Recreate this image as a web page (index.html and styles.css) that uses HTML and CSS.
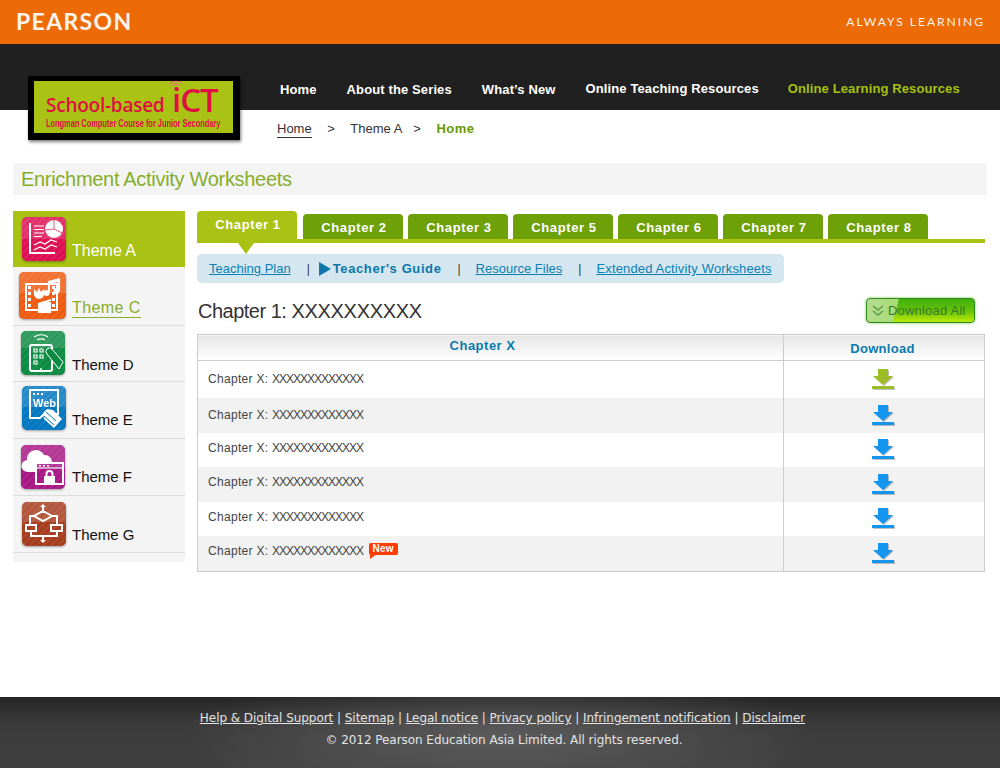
FILE: index.html
```html
<!DOCTYPE html>
<html>
<head>
    <title>Enrichment Activity Worksheets</title>
    <link rel="stylesheet" href="styles.css">
</head>
<body>
    <svg class="defs" width="0" height="0">
        <defs>
            <pattern id="stripes" width="5" height="5" patternUnits="userSpaceOnUse" patternTransform="rotate(45)">
                <rect width="2" height="5" fill="#fff" fill-opacity="0.07" />
            </pattern>
        </defs>
    </svg>
    <div class="top-bar">
        <div class="brand">PEARSON</div>
        <div class="slogan">ALWAYS LEARNING</div>
    </div>
    <div class="nav-bar">
        <div class="logo">
            <div class="logo-inner">
                <div class="logo-title">
                    <span class="logo-school">School-based</span>
                    <span class="logo-ict">
                        <svg class="logo-wifi" viewBox="0 0 14 7"><path d="M1 3.5C4 .5 10 .5 13 3.5M3.5 5.5C5.5 3.8 8.5 3.8 10.5 5.5" /></svg>
                        iCT
                    </span>
                </div>
                <div class="logo-sub">Longman Computer Course for Junior Secondary</div>
            </div>
        </div>
        <ul class="nav">
            <li><a href="#">Home</a></li>
            <li><a href="#">About the Series</a></li>
            <li><a href="#">What’s New</a></li>
            <li class="up"><a href="#">Online Teaching Resources</a></li>
            <li class="up current"><a href="#">Online Learning Resources</a></li>
        </ul>
    </div>
    <div class="crumbs">
        <a href="#">Home</a>
        <span class="sep first">&gt;</span>
        <span>Theme A</span>
        <span class="sep">&gt;</span>
        <strong>Home</strong>
    </div>
    <h1 class="page-title">Enrichment Activity Worksheets</h1>
    <div class="main">
        <ul class="side">
            <li class="active">
                <svg class="icon" viewBox="0 0 44 44">
                    <rect width="44" height="44" rx="5" fill="#dd0f52" />
                    <rect width="44" height="44" rx="5" fill="url(#stripes)" />
                    <path class="gloss" d="M0 5a5 5 0 0 1 5-5h34a5 5 0 0 1 5 5v17H0z" />
                    <path class="line" d="M8 6v30h25" />
                    <path class="line thin" d="M12 9h10M12 12.5h10M12 16h10M12 19.5h8M12 28l6-3 5 2 6-4 6 2M12 33l6-3 5 2 6-4 6 2" />
                    <circle class="solid" cx="32" cy="12" r="9" />
                    <path class="cut" d="M32 3v9l8 4M32 12l-9 1" />
                </svg>
                <span>Theme A</span>
            </li>
            <li class="on big">
                <svg class="icon" viewBox="0 0 47 47">
                    <rect width="47" height="47" rx="5" fill="#ee5a10" />
                    <rect width="47" height="47" rx="5" fill="url(#stripes)" />
                    <path class="gloss" d="M0 5a5 5 0 0 1 5-5h37a5 5 0 0 1 5 5v16H0z" />
                    <path class="line" d="M7 12h31v26H7z" />
                    <path class="solid" d="M9 14h3v3H9zM9 20h3v3H9zM9 26h3v3H9zM9 32h3v3H9zM33 14h3v3h-3zM33 20h3v3h-3zM33 26h3v3h-3zM33 32h3v3h-3z" />
                    <path class="solid" d="M15 17l3 3 2-4 2 4 3-3v5a5 5 0 0 1-10 0zM19 31l13-4v2l-3 1h3v11H19z" />
                    <path class="solid" d="M29 21V9l12-3v13h-2V10l-8 2v9z" />
                    <circle class="solid" cx="27.5" cy="21" r="3" />
                    <circle class="solid" cx="37.5" cy="19" r="3" />
                </svg>
                <a href="#">Theme C</a>
            </li>
            <li class="short">
                <svg class="icon" viewBox="0 0 44 44">
                    <rect width="44" height="44" rx="5" fill="#0b8a42" />
                    <rect width="44" height="44" rx="5" fill="url(#stripes)" />
                    <path class="gloss" d="M0 5a5 5 0 0 1 5-5h34a5 5 0 0 1 5 5v12H0z" />
                    <path class="line" d="M11 14h18a2 2 0 0 1 2 2v22a2 2 0 0 1-2 2H11a2 2 0 0 1-2-2V16a2 2 0 0 1 2-2z" />
                    <path class="line thin" d="M13 6c4-3 10-3 14 0M16 9c2-1.5 6-1.500 8 0M13 18h3v3h-3zM19 18h3v3h-3zM13 24h3v3h-3zM19 24h3v3h-3zM13 30h3v3h-3z" />
                    <path class="finger" d="M26 23a3 3 0 0 1 5-5l11 13-4 7z" />
                    <circle class="solid" cx="20" cy="38" r="1" />
                </svg>
                <span>Theme D</span>
            </li>
            <li class="web">
                <svg class="icon" viewBox="0 0 44 44">
                    <rect width="44" height="44" rx="5" fill="#0276bf" />
                    <rect width="44" height="44" rx="5" fill="url(#stripes)" />
                    <path class="gloss" d="M0 5a5 5 0 0 1 5-5h34a5 5 0 0 1 5 5v16H0z" />
                    <path class="line" d="M8 4h28v24H22l-4 4H8z" />
                    <path class="solid" d="M11 7h2v2h-2zM15 7h2v2h-2zM19 7h2v2h-2z" />
                    <text class="icon-text" x="11" y="21">Web</text>
                    <path class="solid" d="M25 23l6 1 9 9-8 9-10-9-1-6z" />
                    <path class="cut thin" d="M24 26l10 9M22 30l10 9" />
                </svg>
                <span>Theme E</span>
            </li>
            <li class="cloud">
                <svg class="icon" viewBox="0 0 44 44">
                    <rect width="44" height="44" rx="5" fill="#a81684" />
                    <rect width="44" height="44" rx="5" fill="url(#stripes)" />
                    <path class="gloss" d="M0 5a5 5 0 0 1 5-5h34a5 5 0 0 1 5 5v17H0z" />
                    <path class="solid" d="M7 27a6 6 0 0 1-1-12 9 9 0 0 1 17-5 7 7 0 0 1 8 7H14v10z" />
                    <path class="line" d="M15 18h27v21H15z" />
                    <path class="line thin" d="M15 23h27" />
                    <path class="solid" d="M18 20h2v1.5h-2zM22 20h2v1.5h-2zM26 20h2v1.5h-2zM23 31h11v8H23z" />
                    <path class="line" d="M25.5 31v-2a3 3 0 0 1 6 0v2" />
                </svg>
                <span>Theme F</span>
            </li>
            <li class="flow">
                <svg class="icon" viewBox="0 0 44 44">
                    <rect width="44" height="44" rx="5" fill="#a63c1e" />
                    <rect width="44" height="44" rx="5" fill="url(#stripes)" />
                    <path class="gloss" d="M0 5a5 5 0 0 1 5-5h34a5 5 0 0 1 5 5v15H0z" />
                    <path class="line" d="M21 5v4M21 9l9 5-9 5-9-5zM12 14H8v9M30 14h5v9M4 23h10v6H4zM29 23h11v6H29zM9 29v5h26v-5M21 34v5" />
                    <path class="solid" d="M18 5l3-3 3 3zM18 38h6l-3 3z" />
                </svg>
                <span>Theme G</span>
            </li>
        </ul>
        <div class="content">
            <ul class="tabs">
                <li class="active">Chapter 1</li>
                <li>Chapter 2</li>
                <li>Chapter 3</li>
                <li>Chapter 5</li>
                <li>Chapter 6</li>
                <li>Chapter 7</li>
                <li>Chapter 8</li>
            </ul>
            <div class="subnav">
                <a href="#">Teaching Plan</a>
                <span class="bar before-current">|</span>
                <strong class="current">Teacher's Guide</strong>
                <span class="bar">|</span>
                <a href="#">Resource Files</a>
                <span class="bar">|</span>
                <a class="wide" href="#">Extended Activity Worksheets</a>
            </div>
            <div class="heading">
                <h2>Chapter 1: <span class="xs">XXXXXXXXXX</span></h2>
                <a class="download-all" href="#">
                    <svg class="chev" viewBox="0 0 12 12"><path d="M1 1l5 4 5-4M1 6l5 4 5-4" /></svg>
                    Download All
                </a>
            </div>
            <table class="files">
                <tr>
                    <th class="name">Chapter X</th>
                    <th class="dl low">Download</th>
                </tr>
                <tr class="r1">
                    <td>Chapter X: <span class="xs">XXXXXXXXXXXXX</span></td>
                    <td class="dl"><svg class="arrow green" viewBox="0 0 22 21"><path d="M6 0h10v7h5L11 16 1 7h5zM0 17h22v3H0z" /></svg></td>
                </tr>
                <tr class="r2 alt">
                    <td>Chapter X: <span class="xs">XXXXXXXXXXXXX</span></td>
                    <td class="dl"><svg class="arrow" viewBox="0 0 22 21"><path d="M6 0h10v7h5L11 16 1 7h5zM0 17h22v3H0z" /></svg></td>
                </tr>
                <tr class="r3">
                    <td>Chapter X: <span class="xs">XXXXXXXXXXXXX</span></td>
                    <td class="dl"><svg class="arrow" viewBox="0 0 22 21"><path d="M6 0h10v7h5L11 16 1 7h5zM0 17h22v3H0z" /></svg></td>
                </tr>
                <tr class="r3 alt">
                    <td>Chapter X: <span class="xs">XXXXXXXXXXXXX</span></td>
                    <td class="dl"><svg class="arrow" viewBox="0 0 22 21"><path d="M6 0h10v7h5L11 16 1 7h5zM0 17h22v3H0z" /></svg></td>
                </tr>
                <tr class="r3">
                    <td>Chapter X: <span class="xs">XXXXXXXXXXXXX</span></td>
                    <td class="dl"><svg class="arrow" viewBox="0 0 22 21"><path d="M6 0h10v7h5L11 16 1 7h5zM0 17h22v3H0z" /></svg></td>
                </tr>
                <tr class="r3 alt last">
                    <td>Chapter X: <span class="xs">XXXXXXXXXXXXX</span> <span class="new">New</span></td>
                    <td class="dl"><svg class="arrow" viewBox="0 0 22 21"><path d="M6 0h10v7h5L11 16 1 7h5zM0 17h22v3H0z" /></svg></td>
                </tr>
            </table>
        </div>
    </div>
    <div class="footer">
        <p>
            <a href="#">Help &amp; Digital Support</a> |
            <a href="#">Sitemap</a> |
            <a href="#">Legal notice</a> |
            <a href="#">Privacy policy</a> |
            <a href="#">Infringement notification</a> |
            <a href="#">Disclaimer</a>
        </p>
        <p class="copy">© 2012 Pearson Education Asia Limited. All rights reserved.</p>
    </div>
</body>
</html>
```

FILE: styles.css
```css
* {
    box-sizing: border-box;
}
body {
    font-family: "Liberation Sans", Arial, sans-serif;
    margin: 0;
    padding: 0;
    height: 768px;
    overflow: hidden;
    display: flex;
    flex-direction: column;
    background-color: #fff;
    color: #333;
}
ul {
    list-style: none;
    margin: 0;
    padding: 0;
}
.defs {
    position: absolute;
}

/* orange strip */
.top-bar {
    height: 44px;
    flex: none;
    background-color: #ec6b07;
    color: #fdf3ea;
    display: flex;
    justify-content: space-between;
    align-items: center;
    padding: 0 15px 2px 16px;
}
.brand {
    font-family: Lato, sans-serif;
    font-size: 23px;
    font-weight: bold;
    letter-spacing: 1.35px;
}
.slogan {
    font-family: Lato, sans-serif;
    font-size: 12px;
    letter-spacing: 2px;
}

/* dark nav */
.nav-bar {
    height: 66px;
    flex: none;
    background-color: #202020;
    position: relative;
}
.logo {
    position: absolute;
    left: 28px;
    top: 32px;
    width: 212px;
    height: 64px;
    background-color: #000;
    padding: 5px 7px 7px 6px;
    box-shadow: 1px 2px 3px rgba(0, 0, 0, 0.5);
}
.logo-inner {
    height: 100%;
    background-color: #a9c213;
    color: #df0f43;
    padding-left: 12px;
}
.logo-title {
    display: flex;
    align-items: flex-end;
    height: 34px;
}
.logo-school {
    font-family: "Open Sans", sans-serif;
    font-weight: 600;
    font-size: 19px;
    line-height: 24px;
    width: 126px;
    white-space: nowrap;
    letter-spacing: -0.25px;
    margin-bottom: -2px;
}
.logo-ict {
    position: relative;
    font-family: "Open Sans", sans-serif;
    font-weight: 600;
    font-size: 33px;
    line-height: 30px;
    height: 30px;
    letter-spacing: -1px;
}
.logo-wifi {
    position: absolute;
    left: -3px;
    top: -5px;
    width: 14px;
    height: 7px;
    fill: none;
    stroke: #e8707a;
    stroke-width: 1.2;
}
.logo-sub {
    font-size: 10px;
    line-height: 11px;
    font-weight: bold;
    white-space: nowrap;
    margin-top: 3px;
    transform: scaleX(0.74);
    transform-origin: left center;
}
.nav {
    display: flex;
    gap: 30px;
    padding: 38px 0 0 280px;
    font-size: 13px;
    font-weight: bold;
    letter-spacing: 0.12px;
}
.nav .up {
    margin-top: -1px;
}
.nav .current {
    margin-left: -1px;
}
.nav a {
    color: #fff;
    text-decoration: none;
}
.nav .current a {
    color: #a4c110;
}

/* breadcrumbs */
.crumbs {
    height: 53px;
    flex: none;
    padding: 11px 0 0 277px;
    font-size: 13px;
    color: #333;
}
.crumbs a {
    color: #333;
    text-decoration: none;
    border-bottom: 1px solid #333;
    padding-bottom: 1px;
}
.crumbs .sep {
    margin: 0 10px 0 8px;
}
.crumbs .first {
    margin: 0 12px;
}
.crumbs strong {
    color: #669900;
    margin-left: 2px;
    letter-spacing: 0.5px;
}

.page-title {
    margin: 0 13px;
    height: 32px;
    flex: none;
    background-color: #f4f4f4;
    color: #86ad2a;
    font-size: 20px;
    font-weight: normal;
    line-height: 32px;
    padding-left: 8px;
    letter-spacing: -0.3px;
}

.main {
    display: flex;
    gap: 12px;
    padding: 16px 15px 0 13px;
    flex: 1;
}

/* left menu */
.side {
    width: 172px;
    height: 351px;
    background-color: #f4f4f4;
    flex: none;
}
.side li {
    height: 57px;
    display: flex;
    align-items: flex-end;
    gap: 6px;
    padding: 0 0 6px 9px;
    border-bottom: 1px solid #dcdcdc;
    font-size: 15px;
    color: #111;
}
.side li span,
.side li a {
    line-height: 20px;
}
.side .active {
    height: 56px;
    background-color: #a9c213;
    border-bottom: none;
    color: #fff;
    font-size: 16px;
}
.side .on {
    height: 59px;
    padding-left: 6px;
    font-size: 16px;
}
.side .short {
    height: 56px;
    padding-left: 8px;
}
.side .short .icon,
.side .cloud .icon {
    margin-right: 1px;
}
.side .web {
    padding-bottom: 8px;
}
.side .cloud {
    padding-left: 8px;
}
.side .cloud span {
    margin-bottom: 2px;
}
.side .flow span {
    margin-bottom: 1px;
}
.side .on a {
    color: #86ad2a;
    letter-spacing: 0.4px;
    text-decoration: none;
    border-bottom: 1px solid #86ad2a;
    margin-bottom: 1px;
    line-height: 19px;
}
.icon {
    width: 44px;
    height: 44px;
    flex: none;
    filter: drop-shadow(0 1px 1px rgba(0, 0, 0, 0.35));
}
.big .icon {
    width: 47px;
    height: 47px;
}
.icon .gloss {
    fill: #fff;
    opacity: 0.14;
}
.icon .line {
    fill: none;
    stroke: #fff;
    stroke-width: 2;
}
.icon .thin {
    stroke-width: 1.2;
}
.icon .solid {
    fill: #fff;
}
.icon .cut {
    fill: none;
    stroke: #e05a80;
    stroke-width: 1;
}
.icon .cut.thin {
    stroke: #0276bf;
}
.icon .finger {
    fill: #0b8a42;
    stroke: #fff;
    stroke-width: 1;
}
.icon-text {
    fill: #fff;
    font-size: 11px;
    font-weight: bold;
}

/* tabs */
.content {
    width: 788px;
    flex: none;
}
.tabs {
    display: flex;
    align-items: flex-end;
    gap: 5px;
    height: 32px;
    border-bottom: 4px solid #a9c213;
    position: relative;
}
.tabs li {
    width: 100px;
    height: 25px;
    padding-left: 2px;
    background-color: #6ea008;
    color: #fff;
    border-radius: 4px 4px 0 0;
    font-size: 13px;
    font-weight: bold;
    letter-spacing: 0.6px;
    text-align: center;
    line-height: 28px;
}
.tabs .active {
    height: 32px;
    margin: 0 1px -4px 0;
    background-color: #a9c213;
    border-radius: 4px;
    line-height: 28px;
    position: relative;
}
.tabs .active::after {
    content: "";
    position: absolute;
    left: 41px;
    top: 32px;
    border-style: solid;
    border-width: 11px 8px 0 8px;
    border-color: #a9c213 transparent transparent transparent;
}

.subnav {
    margin-top: 11px;
    width: 587px;
    height: 29px;
    background-color: #d4e7f1;
    border-radius: 5px;
    display: flex;
    align-items: center;
    white-space: nowrap;
    padding-left: 12px;
    font-size: 13px;
    color: #0a7fb5;
}
.subnav a {
    color: #0a7fb5;
    text-decoration: underline;
}
.subnav .wide {
    letter-spacing: 0.15px;
}
.subnav .bar {
    margin: 0 15px 0 16px;
    color: #333;
    font-size: 12px;
}
.subnav .before-current {
    margin-right: 9px;
}
.subnav .current {
    color: #0d77ab;
    letter-spacing: 0.6px;
    display: flex;
    align-items: center;
    gap: 2px;
}
.subnav .current::before {
    content: "";
    border-style: solid;
    border-width: 7px 0 7px 12px;
    border-color: transparent transparent transparent #0d77ab;
}

.heading {
    display: flex;
    justify-content: space-between;
    align-items: center;
    height: 51px;
    padding: 6px 10px 0 1px;
}
.heading h2 {
    margin: 0;
    font-size: 20px;
    font-weight: normal;
    color: #333;
    letter-spacing: -0.5px;
}
.heading .xs {
    letter-spacing: -0.3px;
}
.download-all {
    width: 109px;
    height: 25px;
    margin-top: -2px;
    border: 1px solid #2c8a1c;
    border-radius: 4px;
    background: linear-gradient(104deg, #b3dc8e 0, #a9dc78 28%, rgba(255, 255, 255, 0) 28.5%),
        linear-gradient(to bottom, #3cb00c 0, #6cc40a 55%, #bcea08 100%);
    box-shadow: 0 0 3px rgba(90, 190, 30, 0.8);
    color: #37782a;
    font-size: 13px;
    letter-spacing: 0.2px;
    line-height: 23px;
    text-decoration: none;
    display: flex;
    align-items: center;
    gap: 4px;
    padding-left: 5px;
}
.chev {
    width: 12px;
    height: 12px;
    fill: none;
    stroke: #5f9c55;
    stroke-width: 1.6;
}

/* table */
.files {
    width: 788px;
    border-collapse: collapse;
    border: 1px solid #ccc;
    font-size: 12px;
    letter-spacing: 0.3px;
}
.files th {
    height: 26px;
    padding: 0 0 2px;
    font-size: 13px;
    color: #0a7ab0;
    letter-spacing: 0.5px;
    border: 1px solid #ccc;
    background: linear-gradient(to bottom, #e6e6e6, #fff);
}
.files th.name {
    padding: 0 16px 4px 0;
}
.files th.low {
    padding: 2px 3px 0 0;
    letter-spacing: 0.3px;
}
.files td {
    padding: 0 0 0 10px;
    color: #444;
}
.files td.dl {
    width: 201px;
    padding: 0 3px 0 0;
    border-left: 1px solid #ccc;
    text-align: center;
    line-height: 0;
}
.files .xs {
    letter-spacing: -1px;
}
.files .r1 td {
    height: 37px;
}
.files .r2 td {
    height: 35px;
}
.files .r3 td {
    height: 34.5px;
}
.files .r3 td:first-child {
    padding-bottom: 4px;
}
.files .last td {
    height: 35px;
}
.files .alt td {
    background-color: #f2f2f2;
}
.arrow {
    width: 22px;
    height: 21px;
    fill: #1496f0;
    filter: drop-shadow(1px 1px 0.5px rgba(0, 0, 0, 0.25));
}
.arrow.green {
    fill: #9dbd26;
}
.new {
    display: inline-block;
    position: relative;
    width: 29px;
    height: 12px;
    top: -3px;
    margin-left: 2px;
    background-color: #ff3c00;
    border-radius: 2px;
    color: #fff;
    font-size: 10px;
    font-weight: bold;
    line-height: 12px;
    text-align: center;
    letter-spacing: 0.2px;
}
.new::after {
    content: "";
    position: absolute;
    left: 1px;
    top: 11px;
    border-style: solid;
    border-width: 5px 7px 0 0;
    border-color: #ff3c00 transparent transparent transparent;
}

/* footer */
.footer {
    height: 71px;
    flex: none;
    background: radial-gradient(ellipse 320px 70px at 50% 55%, rgba(255, 255, 255, 0.16), rgba(255, 255, 255, 0)),
        linear-gradient(to bottom, #262626 0, #3a3a3a 35%, #404040 100%);
    color: #e4e4e4;
    font-family: "DejaVu Sans", Verdana, sans-serif;
    font-size: 12px;
    text-align: center;
    padding: 14px 0 0 5px;
    letter-spacing: -0.05px;
}
.footer p {
    margin: 0 0 8px;
    line-height: 14px;
}
.footer .copy {
    padding-left: 3px;
}
.footer a {
    color: #e4e4e4;
    text-decoration: underline;
}
```
